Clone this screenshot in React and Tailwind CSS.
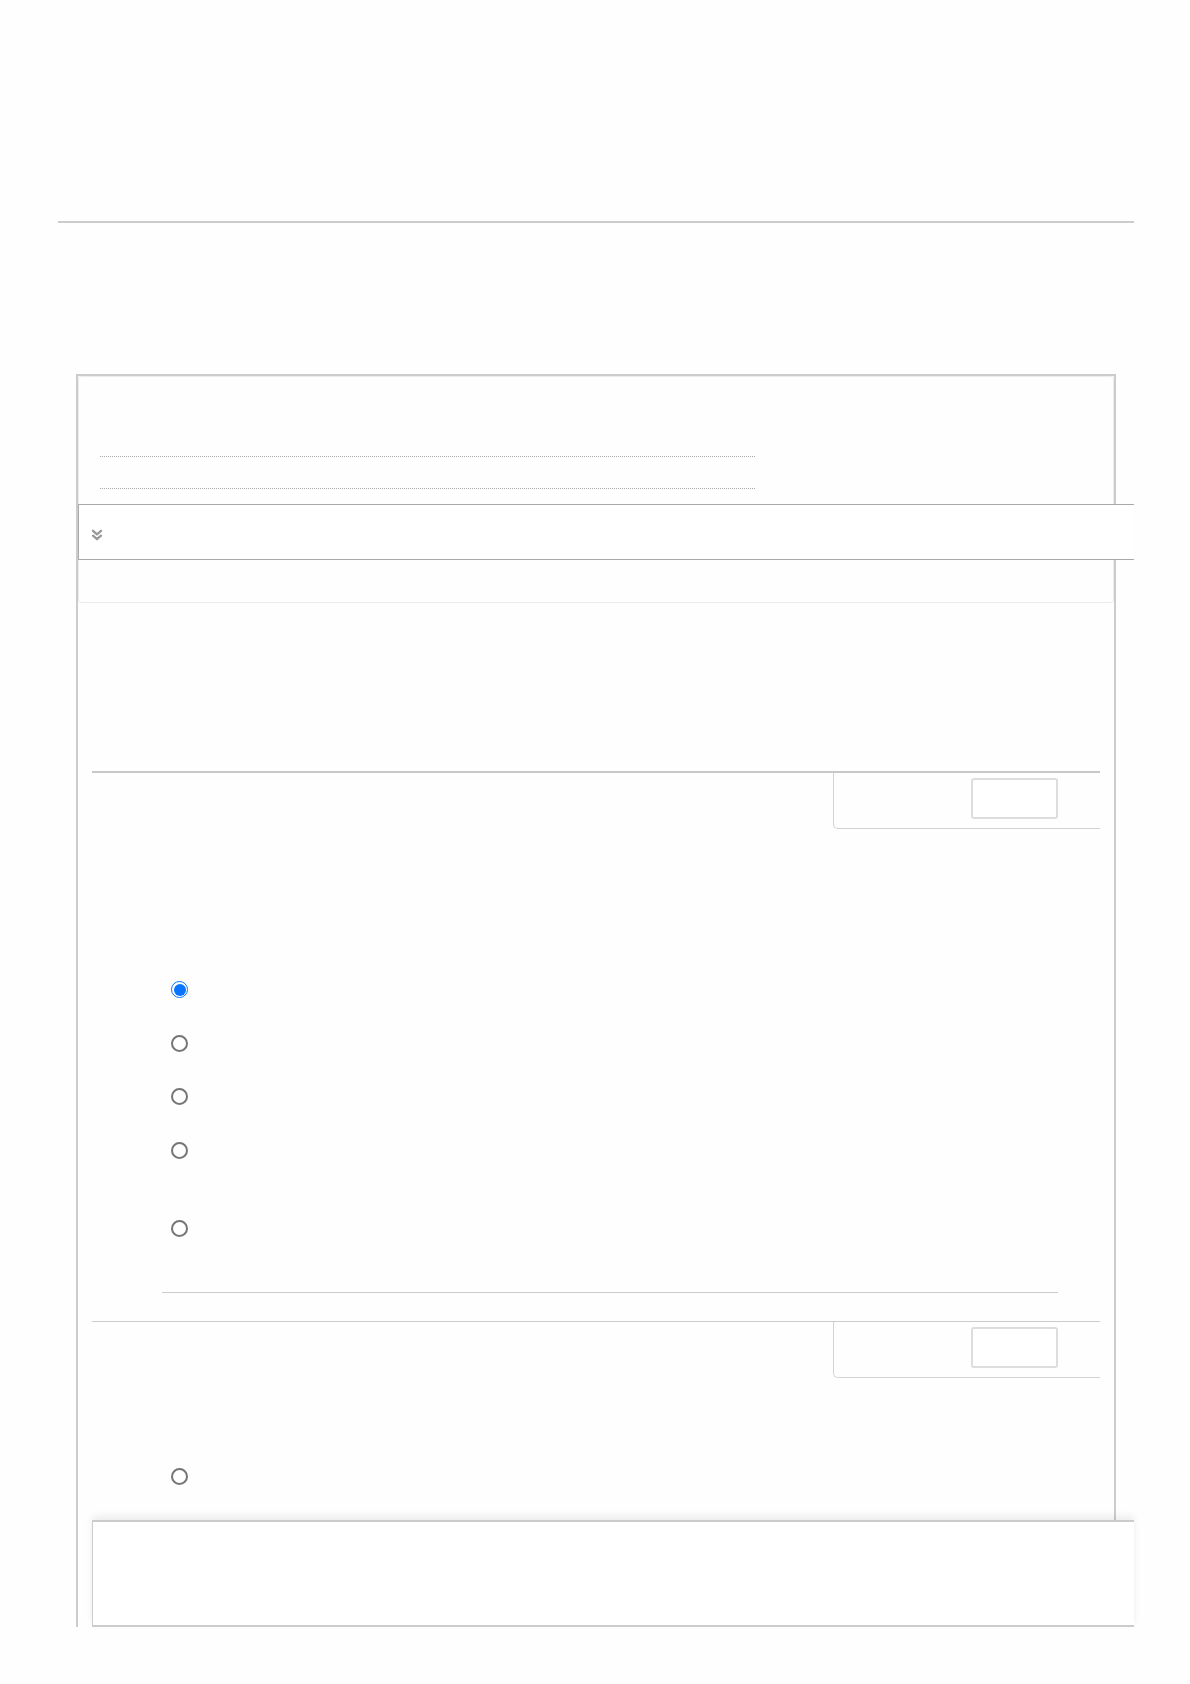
import React from "react";

function Radio({ checked, className = "" }) {
  if (checked) {
    return (
      <div className={"w-[17px] h-[17px] rounded-full border-[1.5px] border-[#0b74ff] bg-white p-[1.5px] " + className}>
        <div className="w-full h-full rounded-full bg-[#0b74ff]" />
      </div>
    );
  }
  return <div className={"w-[17px] h-[17px] rounded-full border-2 border-[#767676] bg-white " + className} />;
}

function SectionHeader({ thick }) {
  return (
    <div className={"flex justify-end " + (thick ? "border-t-2 border-[#c8c8c8]" : "border-t border-[#cccccc]")}>
      <div className="w-[267px] h-[56px] border-l border-b border-[#d2d2d2] rounded-bl-[5px] flex justify-end pr-[42px] pt-[5px]">
        <div className="w-[87px] h-[41px] border-2 border-[#dddddd] rounded-[3px] bg-white" />
      </div>
    </div>
  );
}

export default function App() {
  return (
    <div className="min-h-[1684px] w-full bg-[#fefefe] overflow-hidden pt-[221px]" style={{ fontFamily: '"Liberation Sans", Arial, sans-serif' }}>
      <div className="ml-[58px] w-[1076px] h-[2px] bg-[#cccccc]" />

      <div className="mt-[151px] ml-[76px] w-[1040px] border-t-2 border-l-2 border-r-2 border-[#cccccc]">
        {/* inner panel */}
        <div className="border border-[#ececec] rounded-[3px] pb-[42px]">
          <div className="mt-[79px] ml-[21px] w-[655px] border-t border-dotted border-[#a8a8a8]" />
          <div className="mt-[31px] ml-[21px] w-[655px] border-t border-dotted border-[#a8a8a8]" />
          <div className="mt-[15px] ml-[-1px] w-[1056px] h-[56px] border-t border-b border-l border-[#aaaaaa] bg-white flex items-center pl-[12px] pt-[5px]">
            <svg width="12" height="12" viewBox="0 0 12 12" fill="none" stroke="#999999" strokeWidth="2.3" strokeLinecap="round" strokeLinejoin="round">
              <path d="M2 1.8 L6 5.3 L10 1.8" />
              <path d="M2 6.7 L6 10.2 L10 6.7" />
            </svg>
          </div>
        </div>

        {/* section 1 */}
        <div className="mt-[168px] mx-[14px]">
          <SectionHeader thick />
          <div className="ml-[79px] pt-[152px]">
            <Radio checked />
            <Radio className="mt-[37px]" />
            <Radio className="mt-[36px]" />
            <Radio className="mt-[37px]" />
            <Radio className="mt-[61px]" />
          </div>
          <div className="mt-[55px] ml-[70px] w-[896px] h-px bg-[#cccccc]" />

          {/* section 2 */}
          <div className="mt-[28px]">
            <SectionHeader />
          </div>
          <div className="ml-[79px] pt-[90px]">
            <Radio />
          </div>
        </div>

        {/* bottom box */}
        <div className="mt-[35px] ml-[14px] w-[1042px] h-[107px] border-t-2 border-b-2 border-l border-[#cccccc] bg-white relative shadow-[0_-4px_7px_rgba(0,0,0,0.07)]" />
      </div>
    </div>
  );
}
